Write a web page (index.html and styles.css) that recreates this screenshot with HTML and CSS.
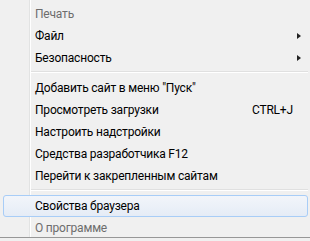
FILE: index.html
```html
<!DOCTYPE html>
<html>
<head>
	<meta charset="utf-8">
	<title>Сервис</title>
	<link rel="stylesheet" href="styles.css">
</head>
<body>
	<div class="menu">
		<div class="item disabled">Печать</div>
		<div class="item">Файл<span class="arrow"></span></div>
		<div class="item">Безопасность<span class="arrow"></span></div>
		<div class="sep"></div>
		<div class="item">Добавить сайт в меню "Пуск"</div>
		<div class="item">Просмотреть загрузки<span class="key">CTRL+J</span></div>
		<div class="item">Настроить надстройки</div>
		<div class="item">Средства разработчика F12</div>
		<div class="item">Перейти к закрепленным сайтам</div>
		<div class="sep"></div>
		<div class="item hover">Свойства браузера</div>
		<div class="item disabled">О программе</div>
	</div>
</body>
</html>
```

FILE: styles.css
```css
html, body {
  margin: 0;
  padding: 0;
  background: #f0f0f0;
}

.menu {
  width: 310px;
  height: 238px;
  box-sizing: border-box;
  padding-top: 3px;
  border-bottom: 1px solid #979797;
  background: linear-gradient(to right, #f0f0f0 29px, #e2e3e3 29px, #e2e3e3 30px, #ffffff 30px, #ffffff 31px, #f0f0f0 31px);
  font-family: Roboto, sans-serif;
  font-size: 12px;
  letter-spacing: -0.2px;
  color: #000;
}

.item {
  position: relative;
  height: 22px;
  line-height: 22px;
  padding-left: 35px;
  white-space: nowrap;
}

.disabled {
  color: #6d6d6d;
}

.arrow {
  position: absolute;
  right: 9px;
  top: 8px;
  width: 0;
  height: 0;
  border-top: 3.5px solid transparent;
  border-bottom: 3.5px solid transparent;
  border-left: 4px solid #222;
}

.key {
  position: absolute;
  left: 252px;
}

.sep {
  height: 0;
  margin: 2px 2px 4px 31px;
  border-top: 1px solid #e0e0e0;
  border-bottom: 1px solid #fff;
}

.hover {
  margin: 0 2px 0 3px;
  padding-left: 31px;
  height: 20px;
  line-height: 20px;
  border: 1px solid #a8cdf7;
  border-radius: 3px;
  background: linear-gradient(#f2f5fa, #e5ecf6);
}
```
